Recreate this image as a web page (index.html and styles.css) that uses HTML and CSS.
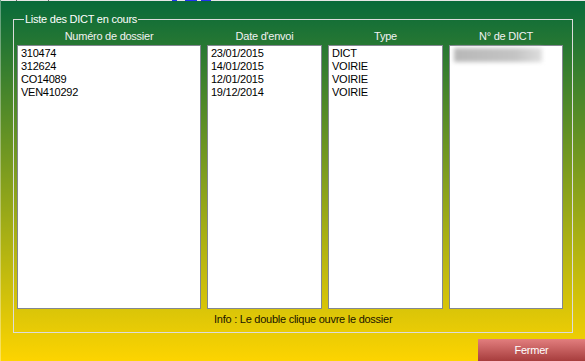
FILE: index.html
```html
<!DOCTYPE html>
<html lang="fr">
<head>
<meta charset="utf-8">
<title>Liste des DICT en cours</title>
<link rel="stylesheet" href="styles.css">
</head>
<body>
<div class="window">
  <div class="topstrip"></div>
  <fieldset class="group">
    <legend class="group-title">Liste des DICT en cours</legend>
    <div class="columns">
      <div class="col-head">Numéro de dossier</div>
      <div class="col-head">Date d'envoi</div>
      <div class="col-head">Type</div>
      <div class="col-head">N° de DICT</div>
      <ul class="listbox">
        <li>310474</li>
        <li>312624</li>
        <li>CO14089</li>
        <li>VEN410292</li>
      </ul>
      <ul class="listbox">
        <li>23/01/2015</li>
        <li>14/01/2015</li>
        <li>12/01/2015</li>
        <li>19/12/2014</li>
      </ul>
      <ul class="listbox">
        <li>DICT</li>
        <li>VOIRIE</li>
        <li>VOIRIE</li>
        <li>VOIRIE</li>
      </ul>
      <div class="listbox">
        <div class="redacted"></div>
      </div>
    </div>
    <div class="info">Info : Le double clique ouvre le dossier</div>
  </fieldset>
  <div class="actions">
    <button class="btn-close" type="button">Fermer</button>
  </div>
</div>
</body>
</html>
```
FILE: styles.css
```css
html, body {
  margin: 0;
  padding: 0;
}
body {
  width: 585px;
  height: 361px;
  overflow: hidden;
  font-family: "Liberation Sans", Arial, sans-serif;
  font-size: 11px;
  letter-spacing: -0.25px;
}
.window {
  box-sizing: border-box;
  width: 585px;
  height: 361px;
  display: flex;
  flex-direction: column;
  background: linear-gradient(to bottom, #086a3a 0%, #fdd400 100%);
  border-left: 1px solid rgba(255, 255, 255, 0.35);
  overflow: hidden;
}
.topstrip {
  height: 1px;
  flex: none;
  background: linear-gradient(to right,
    #e6e6e6 0, #e6e6e6 15px, #666 15px, #666 16px,
    #e6e6e6 16px, #e6e6e6 47px, #666 47px, #666 48px,
    #e6e6e6 48px, #e6e6e6 171px, #2233ee 171px, #2233ee 176px,
    #e6e6e6 176px, #e6e6e6 184px, #2233ee 184px, #2233ee 196px,
    #e6e6e6 196px, #e6e6e6 200px, #2233ee 200px, #2233ee 210px,
    #e6e6e6 210px, #e6e6e6 100%);
}
.group {
  flex: none;
  margin: 12px 12px 0 12px;
  padding: 4px 8px 6px 3px;
  border: 1px solid #dcdcdc;
  min-width: 0;
}
.group-title {
  margin-left: 7px;
  padding: 0 1px;
  line-height: 13px;
  color: #ffffff;
}
.columns {
  display: grid;
  grid-template-columns: 184px 115px 115px 114px;
  grid-template-rows: 13px 264px;
  column-gap: 6px;
  row-gap: 2px;
}
.col-head {
  text-align: center;
  line-height: 13px;
  color: #f2f2f2;
}
.listbox {
  box-sizing: border-box;
  margin: 0;
  padding: 1px 3px;
  list-style: none;
  background: #ffffff;
  border: 1px solid #828790;
  color: #000000;
  line-height: 13px;
}
.redacted {
  width: 88px;
  height: 14px;
  margin: 1px 0 0 1px;
  background: linear-gradient(to right, #b8b8b8 0%, #c4c4c4 70%, #dedede 100%);
  filter: blur(2px);
}
.info {
  margin: 4px 0 0 197px;
  line-height: 13px;
  color: #1a1400;
}
.actions {
  flex: none;
  display: flex;
  justify-content: flex-end;
  margin-top: 6px;
}
.btn-close {
  width: 107px;
  height: 23px;
  margin: 0;
  padding: 0 0 1px 0;
  border: none;
  background: linear-gradient(to bottom, #e27e7e 0%, #a43a3a 100%);
  color: #ffffff;
  font-family: "Liberation Sans", Arial, sans-serif;
  font-size: 11px;
  letter-spacing: -0.25px;
  line-height: 22px;
  text-align: center;
}
```
